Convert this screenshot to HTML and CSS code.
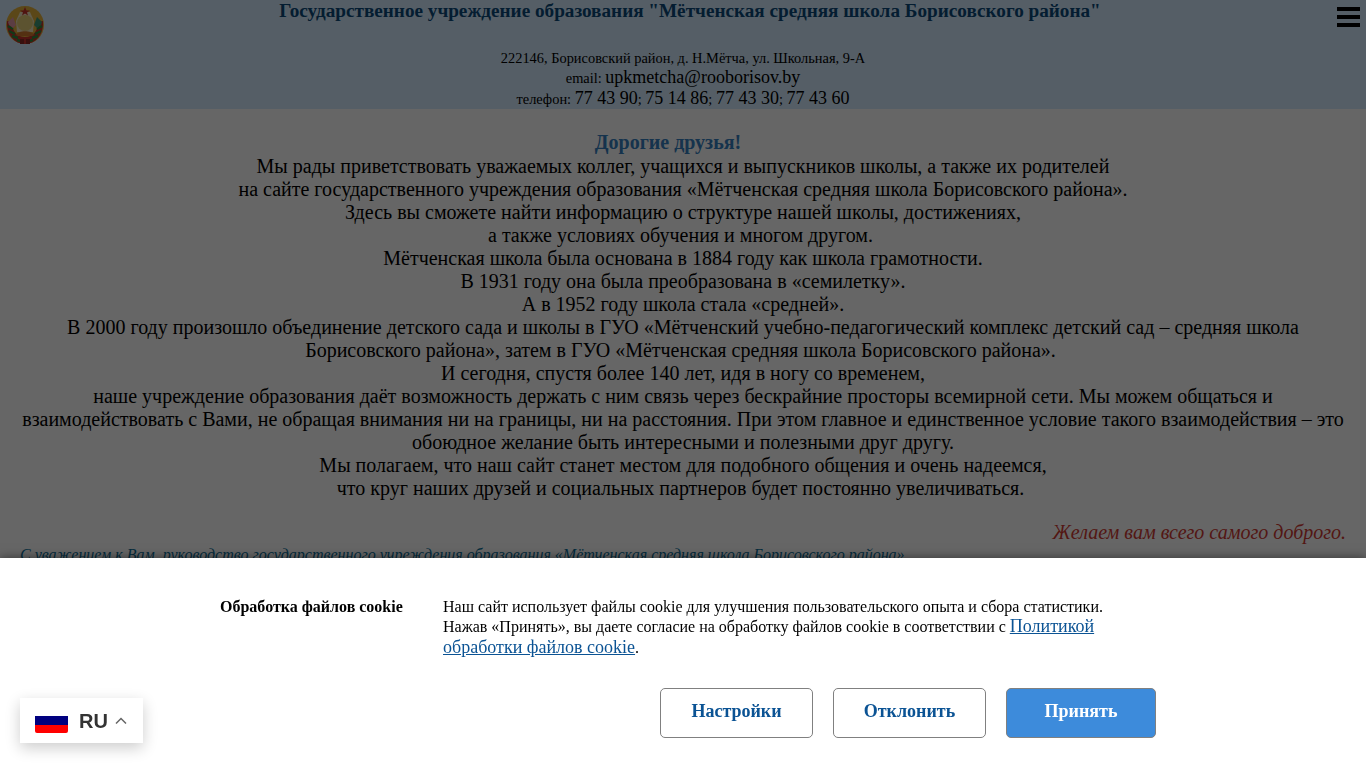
FILE: index.html
```html
<!DOCTYPE html>
<html lang="ru">
<head>
    <meta charset="UTF-8">
    <meta name="viewport" content="width=device-width, initial-scale=1.0">
    <title>Мётченская средняя школа</title>
    <link rel="stylesheet" href="styles.css">
</head>
<body>
    <header class="site-header">
        <svg class="emblem" width="40" height="40" viewBox="0 0 40 40">
            <circle cx="20" cy="20" r="19" fill="#e3b23c"/>
            <path d="M2 16C1 30 10 39 20 39C30 39 39 30 38 16L33 17C33 26 28 32 20 32C12 32 7 26 7 17Z" fill="#c8322b"/>
            <path d="M3 21L8 24M4 26L10 29M7 31L13 33M12 35L16 36M37 21L32 24M36 26L30 29M33 31L27 33M28 35L24 36" stroke="#2f8a3c" stroke-width="2.4"/>
            <path d="M3 17L8 12L11 20L8 23L4 20Z" fill="#e39aa8"/>
            <path d="M37 17L32 12L29 20L32 23L36 20Z" fill="#3f9a78"/>
            <path d="M15 7L25 7L29 16L28 27L12 27L11 16Z" fill="#f3e6c0"/>
            <circle cx="20" cy="18" r="8" fill="#e6cf78"/>
            <path d="M11 30C13 25 27 25 29 30L27 31H13Z" fill="#d2792e"/>
            <path d="M20 2L21.5 5.5L25 5.5L22 7.5L23 10.5L20 8.5L17 10.5L18 7.5L15 5.5L18.5 5.5Z" fill="#c8322b"/>
            <path d="M15 34H19V39H15Z M21 34H25V39H21Z" fill="#8c2a24"/>
        </svg>
        <h1 class="school-name">Государственное учреждение образования "Мётченская средняя школа Борисовского района"</h1>
        <div class="menu-icon"><span></span><span></span><span></span></div>
        <p class="address">222146, Борисовский район, д. Н.Мётча, ул. Школьная, 9-А</p>
        <p class="contact">email: <span class="contact-value">upkmetcha@rooborisov.by</span></p>
        <p class="contact">телефон: <span class="contact-value">77 43 90</span>; <span class="contact-value">75 14 86</span>; <span class="contact-value">77 43 30</span>; <span class="contact-value">77 43 60</span></p>
    </header>

    <main class="welcome">
        <h2 class="welcome-title">Дорогие друзья!</h2>
        <p class="welcome-text">
            Мы рады приветствовать уважаемых коллег, учащихся и выпускников школы, а также их родителей<br>
            на сайте государственного учреждения образования «Мётченская средняя школа Борисовского района».<br>
            Здесь вы сможете найти информацию о структуре нашей школы, достижениях,<br>
            а также условиях обучения и многом другом.&nbsp;<br>
            Мётченская школа была основана в 1884 году как школа грамотности.<br>
            В 1931 году она была преобразована в «семилетку».<br>
            А в 1952 году школа стала «средней».<br>
            В 2000 году произошло объединение детского сада и школы в ГУО «Мётченский учебно-педагогический комплекс детский сад – средняя школа Борисовского района», затем в ГУО «Мётченская средняя школа Борисовского района».&nbsp;<br>
            И сегодня, спустя более 140 лет, идя в ногу со временем,<br>
            наше учреждение образования даёт возможность держать с ним связь через бескрайние просторы всемирной сети. Мы можем общаться и взаимодействовать с Вами, не обращая внимания ни на границы, ни на расстояния. При этом главное и единственное условие такого взаимодействия – это обоюдное желание быть интересными и полезными друг другу.<br>
            Мы полагаем, что наш сайт станет местом для подобного общения и очень надеемся,<br>
            что круг наших друзей и социальных партнеров будет постоянно увеличиваться.&nbsp;
        </p>
        <p class="wish">Желаем вам всего самого доброго.</p>
        <p class="signature">С уважением к Вам, руководство государственного учреждения образования «Мётченская средняя школа Борисовского района»</p>
    </main>

    <div class="overlay"></div>

    <section class="cookie-panel">
        <div class="cookie-info">
            <strong class="cookie-title">Обработка файлов cookie</strong>
            <div class="cookie-text">
                <p class="cookie-line">Наш сайт использует файлы cookie для улучшения пользовательского опыта и сбора статистики.</p>
                <p class="cookie-line cookie-consent">Нажав «Принять», вы даете согласие на обработку файлов cookie в соответствии с <a href="#">Политикой обработки файлов cookie</a>.</p>
            </div>
        </div>
        <div class="cookie-buttons">
            <button class="btn">Настройки</button>
            <button class="btn">Отклонить</button>
            <button class="btn btn-accept">Принять</button>
        </div>
    </section>

    <div class="lang-switch">
        <svg class="flag" width="33" height="25" viewBox="0 0 33 25">
            <path d="M0 0H33V8.5H0Z" fill="#fff"/>
            <path d="M0 8H33V17H0Z" fill="#00007f"/>
            <path d="M0 17H33V23A2 2 0 0 1 31 25H2A2 2 0 0 1 0 23Z" fill="#ff0000"/>
        </svg>
        <span class="lang-code">RU</span>
        <svg class="chevron" width="12" height="7" viewBox="0 0 12 7">
            <path d="M1 6.5L6 1.5L11 6.5" fill="none" stroke="#666" stroke-width="1.5"/>
        </svg>
    </div>
</body>
</html>
```

FILE: styles.css
```css
body {
    margin: 0;
    font-family: 'Liberation Serif', serif;
    background: #fff;
    color: #000;
}

.site-header {
    height: 109px;
    text-align: center;
    background: #d5ecff;
    overflow: hidden;
}

.emblem {
    position: absolute;
    left: 5px;
    top: 5px;
}

.school-name {
    margin: 0 0 28px;
    padding-left: 14px;
    font-size: 19.2px;
    line-height: 22px;
    color: #0a4a7a;
}

.menu-icon {
    position: absolute;
    top: 7px;
    right: 6px;
    width: 23px;
}

.menu-icon span {
    display: block;
    height: 4px;
    margin-bottom: 4px;
    background: #000;
}

.address,
.contact {
    margin: 0;
    font-size: 14.4px;
}

.address {
    line-height: 17px;
}

.contact {
    line-height: 20px;
}

.contact-value {
    font-size: 18px;
}

.welcome {
    padding: 22px 20px 0;
    font-size: 20px;
    line-height: 23px;
    text-align: center;
}

.welcome-title {
    margin: 0 0 1px;
    padding-right: 30px;
    font-size: 20px;
    line-height: 23px;
    color: #3580c0;
}

.welcome-text {
    margin: 0;
}

.wish {
    margin: 21px 0 0;
    font-size: 20px;
    font-style: italic;
    text-align: right;
    color: #d03a32;
}

.signature {
    margin: -1px 0 0;
    font-size: 16px;
    font-style: italic;
    text-align: left;
    color: #0b6f9a;
}

.overlay {
    position: fixed;
    inset: 0;
    background: rgba(0, 0, 0, 0.6);
}

.cookie-panel {
    position: fixed;
    left: 0;
    right: 0;
    bottom: 0;
    height: 210px;
    box-sizing: border-box;
    padding: 39px 210px 0 220px;
    background: #fff;
    box-shadow: 0 0 10px rgba(0, 0, 0, 0.5);
}

.cookie-info {
    display: flex;
    height: 61px;
}

.cookie-title {
    width: 223px;
    flex-shrink: 0;
    font-size: 16px;
    line-height: 20px;
}

.cookie-text {
    width: 670px;
    font-size: 16px;
    line-height: 20px;
}

.cookie-line {
    margin: 0;
}

.cookie-consent {
    margin-top: -1px;
}

.cookie-text a {
    font-size: 18px;
    color: #0b5394;
}

.cookie-buttons {
    display: flex;
    justify-content: flex-end;
    gap: 20px;
    margin-top: 30px;
}

.btn {
    width: 153px;
    height: 50px;
    padding: 0 0 4px;
    font-family: 'Liberation Serif', serif;
    font-size: 18px;
    font-weight: bold;
    color: #0b5394;
    background: #fff;
    border: 1px solid #808080;
    border-radius: 5px;
}

.btn-accept {
    width: 150px;
    color: #fff;
    background: #3d8bdb;
}

.lang-switch {
    position: fixed;
    left: 20px;
    bottom: 25px;
    display: flex;
    align-items: center;
    height: 45px;
    padding: 0 16px 0 15px;
    background: #fff;
    box-shadow: 0 5px 15px rgba(0, 0, 0, 0.2);
    font-family: 'Liberation Sans', sans-serif;
}

.lang-code {
    margin-left: 11px;
    padding-top: 2px;
    font-size: 20px;
    font-weight: bold;
    color: #333;
}

.chevron {
    margin-left: 7px;
}
```
